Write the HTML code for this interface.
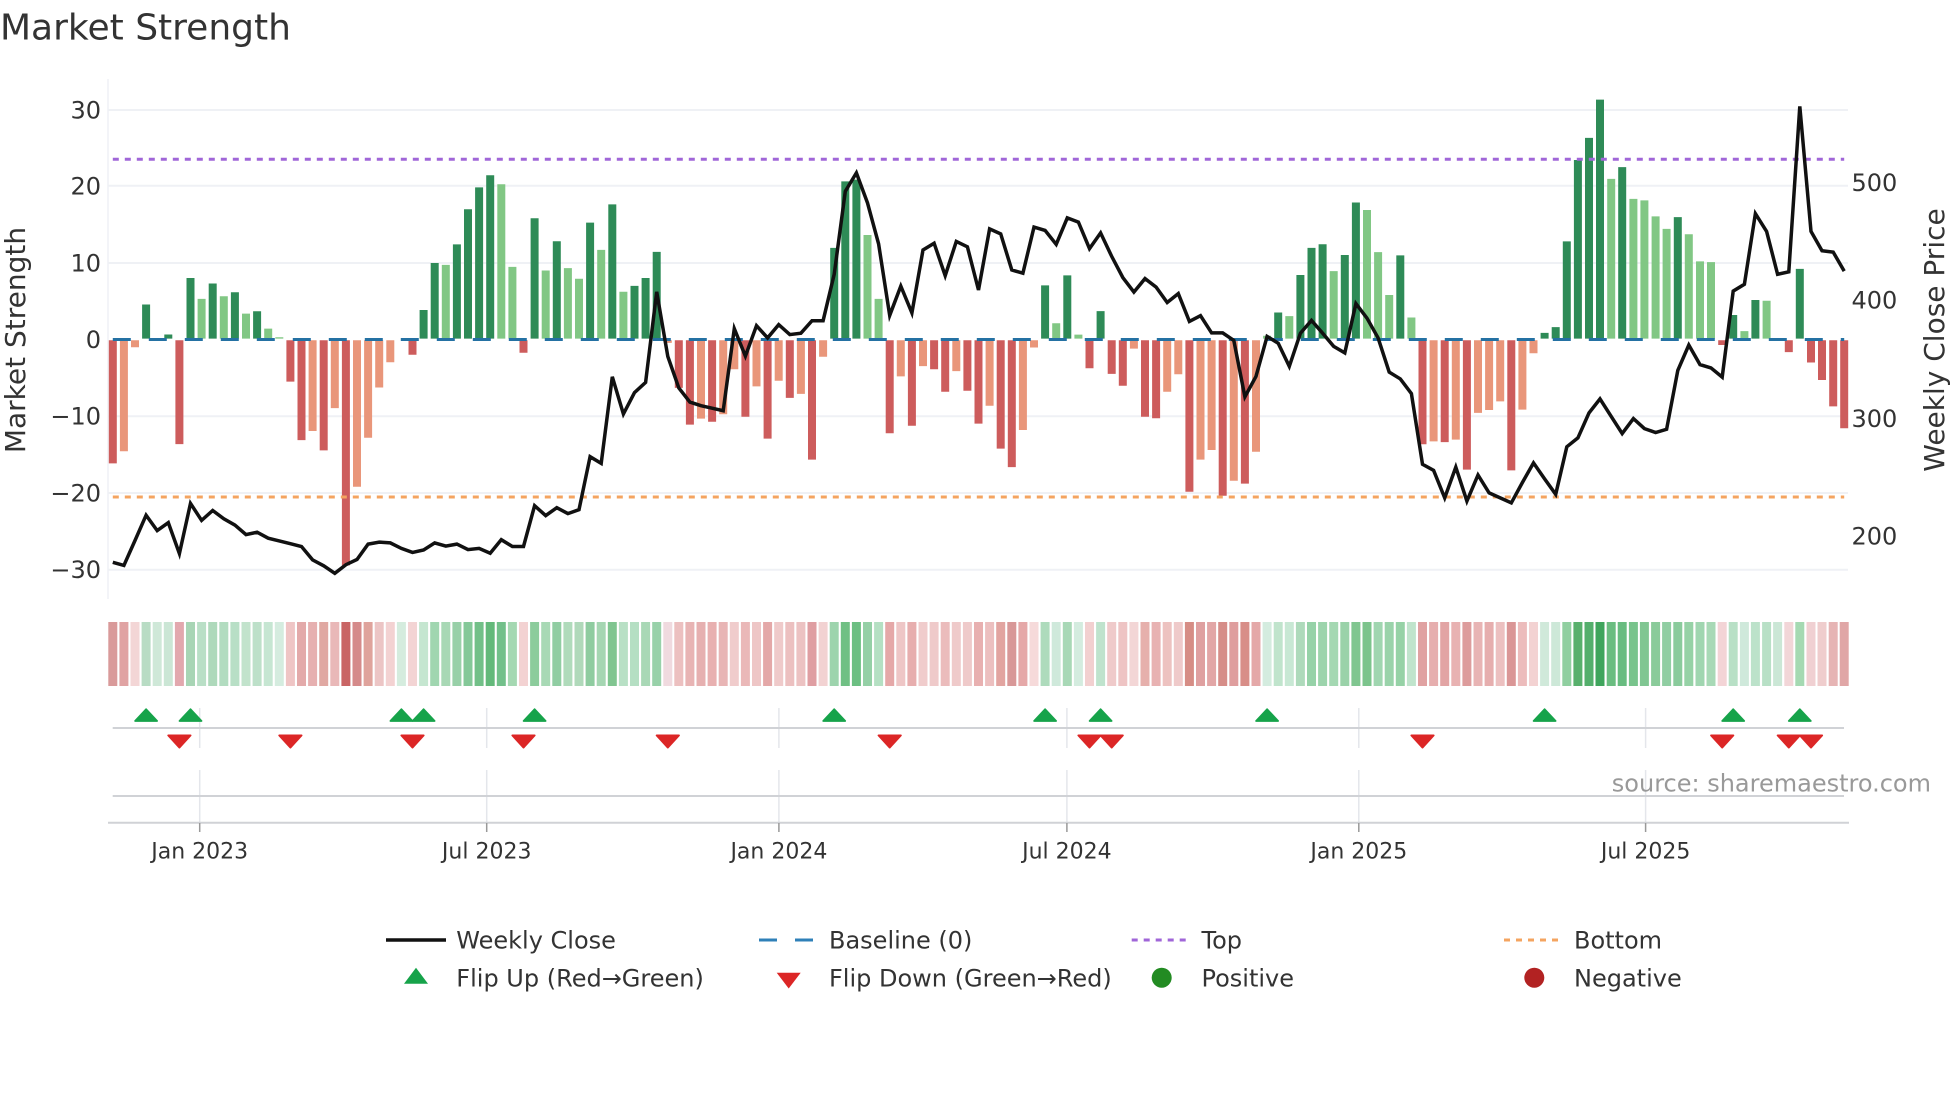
<!DOCTYPE html>
<html lang="en">
<head>
<meta charset="utf-8">
<title>Market Strength</title>
<style>
html,body{margin:0;padding:0;background:#fff;width:1960px;height:1102px;overflow:hidden}
svg{display:block}
text{font-family:"DejaVu Sans","Liberation Sans",sans-serif;fill:#333}
</style>
</head>
<body>
<svg xmlns="http://www.w3.org/2000/svg" width="1960" height="1102" viewBox="0 0 1960 1102">
<rect width="1960" height="1102" fill="#fff"/>
<defs>
<path id="u" d="M0 709.2L-11 721H11Z" fill="#16a34a" stroke="#16a34a" stroke-width="1.8" stroke-linejoin="round"/>
<path id="d" d="M-11.2 735.4H11.2L0 747.6Z" fill="#dc2626" stroke="#dc2626" stroke-width="1.8" stroke-linejoin="round"/>
</defs>

<text x="0" y="39.5" font-size="36">Market Strength</text>

<!-- grid -->
<g stroke="#eff1f5" stroke-width="2" fill="none">
<path d="M108 110H1848M108 185.8H1848M108 263H1848M108 416.2H1848M108 493H1848M108 569.7H1848"/>
<path d="M108 79V599" stroke-width="1.5"/>
</g>

<!-- y ticks -->
<g font-size="24" text-anchor="end">
<text x="101" y="118.5">30</text>
<text x="101" y="194.3">20</text>
<text x="101" y="271.5">10</text>
<text x="101" y="348">0</text>
<text x="101" y="424.7">−10</text>
<text x="101" y="501.5">−20</text>
<text x="101" y="578.2">−30</text>
</g>
<g font-size="24">
<text x="1851.5" y="191">500</text>
<text x="1851.5" y="308.5">400</text>
<text x="1851.5" y="427">300</text>
<text x="1851.5" y="544.5">200</text>
</g>
<text transform="translate(25 340) rotate(-90)" font-size="28" text-anchor="middle">Market Strength</text>
<text transform="translate(1944 340) rotate(-90)" font-size="28" text-anchor="middle">Weekly Close Price</text>

<!-- bars -->
<g fill="none" stroke-width="8">
<path stroke="#2e8b57" d="M146.1 338.6V304.5M168.3 338.6V334.5M190.5 338.6V278M212.7 338.6V283.5M234.9 338.6V292.2M257.1 338.6V311.2M423.6 338.6V310M434.7 338.6V263M456.9 338.6V244.4M468 338.6V209.2M479.1 338.6V187.4M490.2 338.6V175.2M534.6 338.6V218.3M556.8 338.6V241.2M590.1 338.6V222.6M612.3 338.6V204.4M634.5 338.6V285.9M645.6 338.6V278M656.7 338.6V251.9M834.2 338.6V247.9M845.3 338.6V181.4M856.4 338.6V179.6M1045.1 338.6V285.4M1067.3 338.6V275.4M1100.6 338.6V311.1M1278.2 338.6V312.5M1300.4 338.6V275M1311.5 338.6V247.9M1322.6 338.6V244.3M1344.8 338.6V255M1355.9 338.6V202.5M1400.3 338.6V255.4M1544.6 338.6V332.9M1555.7 338.6V327.1M1566.8 338.6V241.4M1577.9 338.6V160M1589 338.6V137.9M1600 338.6V99.6M1622.2 338.6V167.1M1677.8 338.6V217.1M1733.2 338.6V315M1755.4 338.6V300M1799.8 338.6V268.9"/>
<path stroke="#81c784" d="M201.6 338.6V298.9M223.8 338.6V296.2M246 338.6V313.6M268.2 338.6V328.6M279.3 338.6V337.3M445.8 338.6V264.9M501.3 338.6V184.3M512.4 338.6V266.9M545.7 338.6V270.5M567.9 338.6V268.1M579 338.6V278.8M601.2 338.6V249.9M623.4 338.6V291.8M867.5 338.6V235M878.6 338.6V298.9M1056.2 338.6V323.2M1078.4 338.6V334.6M1267.1 338.6V335.7M1289.3 338.6V316.1M1333.7 338.6V271.1M1367 338.6V210M1378.1 338.6V252.1M1389.2 338.6V295M1411.4 338.6V317.5M1611.2 338.6V178.9M1633.4 338.6V198.9M1644.4 338.6V200.4M1655.6 338.6V216.4M1666.6 338.6V228.9M1688.8 338.6V234.3M1700 338.6V261.4M1711 338.6V262.1M1744.4 338.6V331.1M1766.6 338.6V300.7"/>
<path stroke="#cd5c5c" d="M112.8 340.3V463.4M179.4 340.3V444.1M290.4 340.3V381.6M301.5 340.3V440.1M323.7 340.3V450.4M345.9 340.3V565.4M412.5 340.3V354.7M523.5 340.3V352.7M678.8 340.3V387.9M689.9 340.3V424.6M712.1 340.3V421.8M745.4 340.3V416.8M767.6 340.3V438.6M789.8 340.3V397.9M812 340.3V459.6M889.7 340.3V433.2M911.9 340.3V425.7M934.1 340.3V369.3M945.2 340.3V391.8M967.4 340.3V390.7M978.5 340.3V423.6M1000.7 340.3V448.6M1011.8 340.3V467.1M1089.5 340.3V368.2M1111.7 340.3V373.9M1122.8 340.3V385.7M1145 340.3V416.8M1156.1 340.3V418.2M1189.4 340.3V491.8M1222.7 340.3V495.7M1244.9 340.3V483.6M1422.5 340.3V444.3M1444.7 340.3V442.1M1466.9 340.3V469.6M1511.3 340.3V470.4M1722.2 340.3V345M1788.8 340.3V352.1M1811 340.3V362.5M1822 340.3V380M1833.2 340.3V406.4M1844.2 340.3V428.2"/>
<path stroke="#e9967a" d="M123.9 340.3V451.2M135 340.3V347.2M312.6 340.3V431M334.8 340.3V408.1M357 340.3V486.8M368.1 340.3V437.7M379.2 340.3V387.5M390.3 340.3V362.2M667.8 340.3V342.9M701 340.3V418.6M723.2 340.3V414.3M734.3 340.3V369.3M756.5 340.3V386.4M778.7 340.3V380.7M800.9 340.3V393.9M823.1 340.3V356.8M900.8 340.3V376.4M923 340.3V366.1M956.3 340.3V371.1M989.6 340.3V405.7M1022.9 340.3V430M1034 340.3V347.5M1133.9 340.3V348.6M1167.2 340.3V391.8M1178.3 340.3V374.3M1200.5 340.3V459.6M1211.6 340.3V450M1233.8 340.3V480.7M1256 340.3V451.8M1433.6 340.3V441.4M1455.8 340.3V439.6M1478 340.3V412.9M1489.1 340.3V410M1500.2 340.3V401.4M1522.4 340.3V409.6M1533.5 340.3V353.2"/>
</g>

<!-- reference lines -->
<path d="M112.8 159.3H1844.2" stroke="#a066d8" stroke-width="3" stroke-dasharray="6 6" fill="none"/>
<path d="M112.8 497H1844.2" stroke="#f4a460" stroke-width="3" stroke-dasharray="6 6" fill="none"/>
<path d="M112.8 339.5H1844.2" stroke="#2471a3" stroke-width="3" stroke-dasharray="18 18" fill="none"/>

<!-- price -->
<polyline fill="none" stroke="#111" stroke-width="3.5" stroke-linejoin="miter" points="112.8,562.3 123.9,565.4 135,540.5 146.1,515.2 157.2,530.6 168.3,522.7 179.4,553.6 190.5,503.4 201.6,520.4 212.7,510.5 223.8,518.8 234.9,525.1 246,534.6 257.1,532.2 268.2,538.2 279.3,540.9 290.4,543.7 301.5,546.5 312.6,559.9 323.7,565.8 334.8,573.3 345.9,564.7 357,559.5 368.1,544.1 379.2,542.1 390.3,542.9 401.4,548.4 412.5,552.4 423.6,550 434.7,542.9 445.8,546.1 456.9,544.1 468,549.6 479.1,548.4 490.2,553.2 501.3,539.7 512.4,546.5 523.5,546.5 534.6,505.7 545.7,515.6 556.8,507.7 567.9,513.6 579,509.7 590.1,456.7 601.2,463.4 612.3,376.8 623.4,414 634.5,392.6 645.6,382.4 656.7,291.8 667.8,356.4 678.8,387.9 689.9,402.1 701,405.7 712.1,408.2 723.2,410.7 734.3,328.6 745.4,356.1 756.5,325.7 767.6,337.9 778.7,324.6 789.8,334.6 800.9,333.2 812,320.7 823.1,320.7 834.2,274.3 845.3,191.4 856.4,172.9 867.5,202.9 878.6,243.9 889.7,315.4 900.8,286.1 911.9,312.9 923,250 934.1,243.2 945.2,275.7 956.3,241.4 967.4,246.8 978.5,290 989.6,228.9 1000.7,233.9 1011.8,270 1022.9,273.2 1034,227.1 1045.1,230.4 1056.2,244.3 1067.3,217.9 1078.4,222.1 1089.5,248.6 1100.6,232.9 1111.7,256.4 1122.8,277.5 1133.9,292.1 1145,278.6 1156.1,287.1 1167.2,302.5 1178.3,293.6 1189.4,321.4 1200.5,315.7 1211.6,332.9 1222.7,332.9 1233.8,340.4 1244.9,396.8 1256,376.4 1267.1,336.4 1278.2,343.2 1289.3,366.4 1300.4,333.2 1311.5,320.4 1322.6,333.2 1333.7,346.4 1344.8,352.9 1355.9,303.6 1367,318.2 1378.1,337.9 1389.2,372.1 1400.3,378.9 1411.4,393.6 1422.5,464.3 1433.6,470.4 1444.7,497.9 1455.8,467.1 1466.9,501.1 1478,475 1489.1,492.9 1500.2,497.9 1511.3,502.9 1522.4,482.5 1533.5,462.9 1544.6,478.9 1555.7,494.3 1566.8,446.8 1577.9,437.9 1589,412.9 1600,398.9 1611.2,416.4 1622.2,433.6 1633.4,418.6 1644.4,428.6 1655.6,432.5 1666.6,429.3 1677.8,370.4 1688.8,345 1700,364.6 1711,367.9 1722.2,377.1 1733.2,291.1 1744.4,284.3 1755.4,213.6 1766.6,231.4 1777.6,274.3 1788.8,271.8 1799.8,106.4 1811,231.4 1822,250.7 1833.2,252.1 1844.2,271.1"/>

<!-- heat strip -->
<g stroke-width="9" fill="none">
<path stroke="#d99a9a" d="M112.8 622V686"/><path stroke="#e0a3a3" d="M123.9 622V686"/><path stroke="#f3d6d6" d="M135 622V686"/><path stroke="#b8dcc4" d="M146.1 622V686"/><path stroke="#cfe8d8" d="M157.2 622V686"/><path stroke="#cbe6d5" d="M168.3 622V686"/><path stroke="#e2a8ae" d="M179.4 622V686"/><path stroke="#a8d5b5" d="M190.5 622V686"/><path stroke="#b9dfc6" d="M201.6 622V686"/><path stroke="#aed9bb" d="M212.7 622V686"/>
<path stroke="#b2dcc0" d="M223.8 622V686"/><path stroke="#b8dfc6" d="M234.9 622V686"/><path stroke="#c2e3cc" d="M246 622V686"/><path stroke="#bde0c9" d="M257.1 622V686"/><path stroke="#c6e6d2" d="M268.2 622V686"/><path stroke="#d5ecdf" d="M279.3 622V686"/><path stroke="#efc5c5" d="M290.4 622V686"/><path stroke="#e3aaaa" d="M301.5 622V686"/><path stroke="#e6b0b0" d="M312.6 622V686"/><path stroke="#e0a8a2" d="M323.7 622V686"/>
<path stroke="#e9b8b8" d="M334.8 622V686"/><path stroke="#c96565" d="M345.9 622V686"/><path stroke="#d58a8a" d="M357 622V686"/><path stroke="#dfa39c" d="M368.1 622V686"/><path stroke="#ecc5c5" d="M379.2 622V686"/><path stroke="#f3d2d2" d="M390.3 622V686"/><path stroke="#d5ecde" d="M401.4 622V686"/><path stroke="#f3d4d4" d="M412.5 622V686"/><path stroke="#c5e6d0" d="M423.6 622V686"/><path stroke="#a0d6b0" d="M434.7 622V686"/>
<path stroke="#a8d8b5" d="M445.8 622V686"/><path stroke="#98d0a8" d="M456.9 622V686"/><path stroke="#84c898" d="M468 622V686"/><path stroke="#72c088" d="M479.1 622V686"/><path stroke="#63b97a" d="M490.2 622V686"/><path stroke="#72c08a" d="M501.3 622V686"/><path stroke="#a5d8b2" d="M512.4 622V686"/><path stroke="#f3d2d2" d="M523.5 622V686"/><path stroke="#8ccc9c" d="M534.6 622V686"/><path stroke="#a8d9b5" d="M545.7 622V686"/>
<path stroke="#90cda2" d="M556.8 622V686"/><path stroke="#b0dbbb" d="M567.9 622V686"/><path stroke="#b0d9ba" d="M579 622V686"/><path stroke="#8fcca0" d="M590.1 622V686"/><path stroke="#a5d6b2" d="M601.2 622V686"/><path stroke="#80c590" d="M612.3 622V686"/><path stroke="#b8e0c5" d="M623.4 622V686"/><path stroke="#b5dfc3" d="M634.5 622V686"/><path stroke="#a9d8b6" d="M645.6 622V686"/><path stroke="#98d1a9" d="M656.7 622V686"/>
<path stroke="#f0dadf" d="M667.8 622V686"/><path stroke="#ecc0c0" d="M678.8 622V686"/><path stroke="#e8b4b4" d="M689.9 622V686"/><path stroke="#e6b0b0" d="M701 622V686"/><path stroke="#e8b0b0" d="M712.1 622V686"/><path stroke="#e8b5b5" d="M723.2 622V686"/><path stroke="#f0cccc" d="M734.3 622V686"/><path stroke="#eab8b8" d="M745.4 622V686"/><path stroke="#eec6c6" d="M756.5 622V686"/><path stroke="#e4a8a8" d="M767.6 622V686"/>
<path stroke="#efcaca" d="M778.7 622V686"/><path stroke="#ecc0c0" d="M789.8 622V686"/><path stroke="#ecc2c2" d="M800.9 622V686"/><path stroke="#df9ea2" d="M812 622V686"/><path stroke="#f2d2d2" d="M823.1 622V686"/><path stroke="#9dd4ad" d="M834.2 622V686"/><path stroke="#70c084" d="M845.3 622V686"/><path stroke="#6cbf82" d="M856.4 622V686"/><path stroke="#95d0a6" d="M867.5 622V686"/><path stroke="#b5e0c3" d="M878.6 622V686"/>
<path stroke="#e5a8a8" d="M889.7 622V686"/><path stroke="#eec6c6" d="M900.8 622V686"/><path stroke="#e7aeae" d="M911.9 622V686"/><path stroke="#f0cccc" d="M923 622V686"/><path stroke="#efcaca" d="M934.1 622V686"/><path stroke="#ebbcbc" d="M945.2 622V686"/><path stroke="#efcaca" d="M956.3 622V686"/><path stroke="#efcaca" d="M967.4 622V686"/><path stroke="#e8b0b0" d="M978.5 622V686"/><path stroke="#ecbfbf" d="M989.6 622V686"/>
<path stroke="#e2a4a0" d="M1000.7 622V686"/><path stroke="#d89898" d="M1011.8 622V686"/><path stroke="#e5a8a8" d="M1022.9 622V686"/><path stroke="#f6dada" d="M1034 622V686"/><path stroke="#aedbbc" d="M1045.1 622V686"/><path stroke="#cfe9db" d="M1056.2 622V686"/><path stroke="#a8d8b6" d="M1067.3 622V686"/><path stroke="#d4ecdf" d="M1078.4 622V686"/><path stroke="#f2d0d0" d="M1089.5 622V686"/><path stroke="#bfe3cd" d="M1100.6 622V686"/>
<path stroke="#efcaca" d="M1111.7 622V686"/><path stroke="#eec4c4" d="M1122.8 622V686"/><path stroke="#f3d6d6" d="M1133.9 622V686"/><path stroke="#e6b0ac" d="M1145 622V686"/><path stroke="#e8b2b2" d="M1156.1 622V686"/><path stroke="#edc2c0" d="M1167.2 622V686"/><path stroke="#efcaca" d="M1178.3 622V686"/><path stroke="#d68d85" d="M1189.4 622V686"/><path stroke="#dfa0a0" d="M1200.5 622V686"/><path stroke="#e2a6a6" d="M1211.6 622V686"/>
<path stroke="#d68d88" d="M1222.7 622V686"/><path stroke="#df9e9e" d="M1233.8 622V686"/><path stroke="#d88e88" d="M1244.9 622V686"/><path stroke="#e4a8a8" d="M1256 622V686"/><path stroke="#d4ecdf" d="M1267.1 622V686"/><path stroke="#c0e4cc" d="M1278.2 622V686"/><path stroke="#c8e8d4" d="M1289.3 622V686"/><path stroke="#aedabb" d="M1300.4 622V686"/><path stroke="#96d2a8" d="M1311.5 622V686"/><path stroke="#9cd4ac" d="M1322.6 622V686"/>
<path stroke="#a4d8b2" d="M1333.7 622V686"/><path stroke="#9ad2a9" d="M1344.8 622V686"/><path stroke="#80c690" d="M1355.9 622V686"/><path stroke="#7cc48c" d="M1367 622V686"/><path stroke="#a0d6b0" d="M1378.1 622V686"/><path stroke="#9ad3aa" d="M1389.2 622V686"/><path stroke="#96d2a6" d="M1400.3 622V686"/><path stroke="#c0e4cc" d="M1411.4 622V686"/><path stroke="#e0a2a2" d="M1422.5 622V686"/><path stroke="#e6aeae" d="M1433.6 622V686"/>
<path stroke="#e2a4a4" d="M1444.7 622V686"/><path stroke="#e8b2b2" d="M1455.8 622V686"/><path stroke="#dd9c9c" d="M1466.9 622V686"/><path stroke="#e8b4b4" d="M1478 622V686"/><path stroke="#e6aeae" d="M1489.1 622V686"/><path stroke="#ecc0c0" d="M1500.2 622V686"/><path stroke="#da9696" d="M1511.3 622V686"/><path stroke="#ecbcbc" d="M1522.4 622V686"/><path stroke="#f3d2d2" d="M1533.5 622V686"/><path stroke="#d0e9da" d="M1544.6 622V686"/>
<path stroke="#cde8d8" d="M1555.7 622V686"/><path stroke="#90cfa0" d="M1566.8 622V686"/><path stroke="#58b06c" d="M1577.9 622V686"/><path stroke="#54af6c" d="M1589 622V686"/><path stroke="#3fa55c" d="M1600 622V686"/><path stroke="#6abd80" d="M1611.2 622V686"/><path stroke="#68bc80" d="M1622.2 622V686"/><path stroke="#78c48c" d="M1633.4 622V686"/><path stroke="#80c692" d="M1644.4 622V686"/><path stroke="#8acb9a" d="M1655.6 622V686"/>
<path stroke="#90cea2" d="M1666.6 622V686"/><path stroke="#8acb9c" d="M1677.8 622V686"/><path stroke="#96d2a6" d="M1688.8 622V686"/><path stroke="#a0d6b0" d="M1700 622V686"/><path stroke="#a8d9b6" d="M1711 622V686"/><path stroke="#f3d4d6" d="M1722.2 622V686"/><path stroke="#b8e0c6" d="M1733.2 622V686"/><path stroke="#cfe9db" d="M1744.4 622V686"/><path stroke="#bce2ca" d="M1755.4 622V686"/><path stroke="#b8e0c6" d="M1766.6 622V686"/>
<path stroke="#cbe7d6" d="M1777.6 622V686"/><path stroke="#f2d6d8" d="M1788.8 622V686"/><path stroke="#a5d9b2" d="M1799.8 622V686"/><path stroke="#f0d0d2" d="M1811 622V686"/><path stroke="#efcdcd" d="M1822 622V686"/><path stroke="#e6b4b4" d="M1833.2 622V686"/><path stroke="#e0a6a6" d="M1844.2 622V686"/>
</g>

<!-- lower panels -->
<g fill="none" stroke="#e4e6eb" stroke-width="1.5">
<path d="M199.7 708V748M199.7 770V822M486.7 708V748M486.7 770V822M778.9 708V748M778.9 770V822M1066.9 708V748M1066.9 770V822M1358.8 708V748M1358.8 770V822M1645.6 708V748M1645.6 770V822"/>
</g>
<g fill="none" stroke="#d0d2d6" stroke-width="2">
<path d="M112.7 728H1844M112.7 796H1844M108 822.7H1849"/>
</g>
<path d="M199.7 823V832M486.7 823V832M778.9 823V832M1066.9 823V832M1358.8 823V832M1645.6 823V832" stroke="#999" stroke-width="1.5" fill="none"/>

<use href="#u" x="146.1"/><use href="#u" x="190.5"/><use href="#u" x="401.4"/><use href="#u" x="423.6"/><use href="#u" x="534.6"/><use href="#u" x="834.2"/><use href="#u" x="1045.1"/><use href="#u" x="1100.6"/><use href="#u" x="1267.1"/><use href="#u" x="1544.6"/><use href="#u" x="1733.2"/><use href="#u" x="1799.8"/>
<use href="#d" x="179.4"/><use href="#d" x="290.4"/><use href="#d" x="412.5"/><use href="#d" x="523.5"/><use href="#d" x="667.8"/><use href="#d" x="889.7"/><use href="#d" x="1089.5"/><use href="#d" x="1111.7"/><use href="#d" x="1422.5"/><use href="#d" x="1722.2"/><use href="#d" x="1788.8"/><use href="#d" x="1811"/>

<text x="1931" y="791.7" font-size="24" text-anchor="end" style="fill:#999">source: sharemaestro.com</text>

<g font-size="22" text-anchor="middle">
<text x="199.7" y="858.3">Jan 2023</text>
<text x="486.7" y="858.3">Jul 2023</text>
<text x="778.9" y="858.3">Jan 2024</text>
<text x="1066.9" y="858.3">Jul 2024</text>
<text x="1358.8" y="858.3">Jan 2025</text>
<text x="1645.6" y="858.3">Jul 2025</text>
</g>

<!-- legend -->
<g fill="none">
<path d="M386 940H446" stroke="#111" stroke-width="3.5"/>
<path d="M759 940H777M795 940H813" stroke="#2f80b8" stroke-width="3"/>
<path d="M1131.7 940H1186" stroke="#a066d8" stroke-width="3" stroke-dasharray="6 6"/>
<path d="M1504 940H1558" stroke="#f4a460" stroke-width="3" stroke-dasharray="6 6"/>
</g>
<path d="M416 967.7L404 983.7H428Z" fill="#16a34a"/>
<path d="M776.7 972.7H800.7L788.7 988.5Z" fill="#dc2626"/>
<circle cx="1161.7" cy="977.7" r="10" fill="#228b22"/>
<circle cx="1534.3" cy="977.7" r="10" fill="#b22222"/>
<g font-size="24">
<text x="456.3" y="948.3">Weekly Close</text>
<text x="829" y="948.3">Baseline (0)</text>
<text x="1201.5" y="948.3">Top</text>
<text x="1574" y="948.3">Bottom</text>
<text x="456.3" y="986.7">Flip Up (Red→Green)</text>
<text x="829" y="986.7">Flip Down (Green→Red)</text>
<text x="1201.5" y="986.7">Positive</text>
<text x="1574" y="986.7">Negative</text>
</g>
</svg>
</body>
</html>
